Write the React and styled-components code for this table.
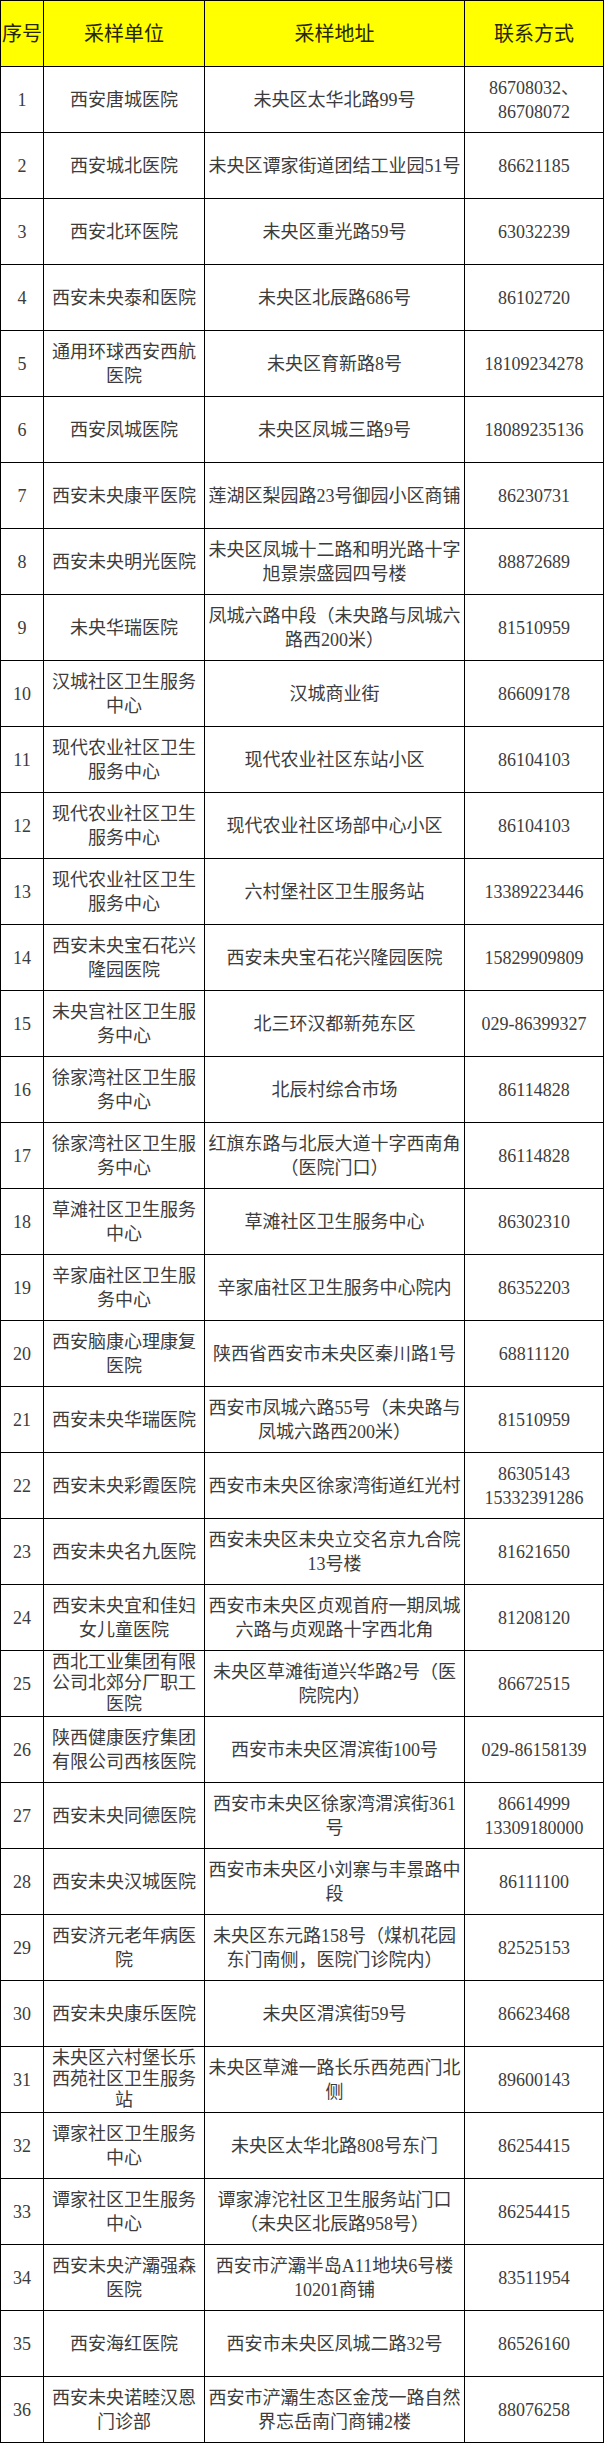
import React from "react";
import styled, { createGlobalStyle } from "styled-components";

const GlobalStyle = createGlobalStyle`
  html, body { margin: 0; padding: 0; background: #ffffff; }
`;

const Grid = styled.div`
  display: grid;
  grid-template-columns: 42px 160px 259px 138px;
  grid-auto-rows: 65px;
  gap: 1px;
  padding: 1px;
  width: 604px;
  box-sizing: border-box;
  background: #000000;
  font-family: "Liberation Serif", "Noto Sans CJK SC", serif;
`;

const HeadCell = styled.div`
  background: #ffff00;
  color: #262600;
  font-size: 20px;
  line-height: 24px;
  display: flex;
  align-items: center;
  justify-content: center;
  white-space: nowrap;
  overflow: hidden;
`;

const Cell = styled.div`
  background: #ffffff;
  color: #3c3c3c;
  font-size: 18px;
  line-height: ${(p) => (p.$tight ? "21px" : "24px")};
  display: flex;
  flex-direction: column;
  align-items: center;
  justify-content: center;
  text-align: center;
  white-space: nowrap;
  overflow: visible;
`;

const Line = styled.span`
  display: block;
`;

const rows = [
  ["1", "西安唐城医院", "未央区太华北路99号", "86708032、|86708072"],
  ["2", "西安城北医院", "未央区谭家街道团结工业园51号", "86621185"],
  ["3", "西安北环医院", "未央区重光路59号", "63032239"],
  ["4", "西安未央泰和医院", "未央区北辰路686号", "86102720"],
  ["5", "通用环球西安西航|医院", "未央区育新路8号", "18109234278"],
  ["6", "西安凤城医院", "未央区凤城三路9号", "18089235136"],
  ["7", "西安未央康平医院", "莲湖区梨园路23号御园小区商铺", "86230731"],
  ["8", "西安未央明光医院", "未央区凤城十二路和明光路十字|旭景崇盛园四号楼", "88872689"],
  ["9", "未央华瑞医院", "凤城六路中段（未央路与凤城六|路西200米）", "81510959"],
  ["10", "汉城社区卫生服务|中心", "汉城商业街", "86609178"],
  ["11", "现代农业社区卫生|服务中心", "现代农业社区东站小区", "86104103"],
  ["12", "现代农业社区卫生|服务中心", "现代农业社区场部中心小区", "86104103"],
  ["13", "现代农业社区卫生|服务中心", "六村堡社区卫生服务站", "13389223446"],
  ["14", "西安未央宝石花兴|隆园医院", "西安未央宝石花兴隆园医院", "15829909809"],
  ["15", "未央宫社区卫生服|务中心", "北三环汉都新苑东区", "029-86399327"],
  ["16", "徐家湾社区卫生服|务中心", "北辰村综合市场", "86114828"],
  ["17", "徐家湾社区卫生服|务中心", "红旗东路与北辰大道十字西南角|（医院门口）", "86114828"],
  ["18", "草滩社区卫生服务|中心", "草滩社区卫生服务中心", "86302310"],
  ["19", "辛家庙社区卫生服|务中心", "辛家庙社区卫生服务中心院内", "86352203"],
  ["20", "西安脑康心理康复|医院", "陕西省西安市未央区秦川路1号", "68811120"],
  ["21", "西安未央华瑞医院", "西安市凤城六路55号（未央路与|凤城六路西200米）", "81510959"],
  ["22", "西安未央彩霞医院", "西安市未央区徐家湾街道红光村", "86305143|15332391286"],
  ["23", "西安未央名九医院", "西安未央区未央立交名京九合院|13号楼", "81621650"],
  ["24", "西安未央宜和佳妇|女儿童医院", "西安市未央区贞观首府一期凤城|六路与贞观路十字西北角", "81208120"],
  ["25", "西北工业集团有限|公司北郊分厂职工|医院", "未央区草滩街道兴华路2号（医|院院内）", "86672515"],
  ["26", "陕西健康医疗集团|有限公司西核医院", "西安市未央区渭滨街100号", "029-86158139"],
  ["27", "西安未央同德医院", "西安市未央区徐家湾渭滨街361|号", "86614999|13309180000"],
  ["28", "西安未央汉城医院", "西安市未央区小刘寨与丰景路中|段", "86111100"],
  ["29", "西安济元老年病医|院", "未央区东元路158号（煤机花园|东门南侧，医院门诊院内）", "82525153"],
  ["30", "西安未央康乐医院", "未央区渭滨街59号", "86623468"],
  ["31", "未央区六村堡长乐|西苑社区卫生服务|站", "未央区草滩一路长乐西苑西门北|侧", "89600143"],
  ["32", "谭家社区卫生服务|中心", "未央区太华北路808号东门", "86254415"],
  ["33", "谭家社区卫生服务|中心", "谭家滹沱社区卫生服务站门口|（未央区北辰路958号）", "86254415"],
  ["34", "西安未央浐灞强森|医院", "西安市浐灞半岛A11地块6号楼|10201商铺", "83511954"],
  ["35", "西安海红医院", "西安市未央区凤城二路32号", "86526160"],
  ["36", "西安未央诺睦汉恩|门诊部", "西安市浐灞生态区金茂一路自然|界忘岳南门商铺2楼", "88076258"],
];

const headers = ["序号", "采样单位", "采样地址", "联系方式"];

function TextCell({ text }) {
  const lines = text.split("|");
  return (
    <Cell $tight={lines.length > 2}>
      {lines.map((l, i) => (
        <Line key={i}>{l}</Line>
      ))}
    </Cell>
  );
}

export default function App() {
  return (
    <>
      <GlobalStyle />
      <Grid>
        {headers.map((h) => (
          <HeadCell key={h}>{h}</HeadCell>
        ))}
        {rows.map((r) => (
          <React.Fragment key={r[0]}>
            {r.map((c, i) => (
              <TextCell key={i} text={c} />
            ))}
          </React.Fragment>
        ))}
      </Grid>
    </>
  );
}
